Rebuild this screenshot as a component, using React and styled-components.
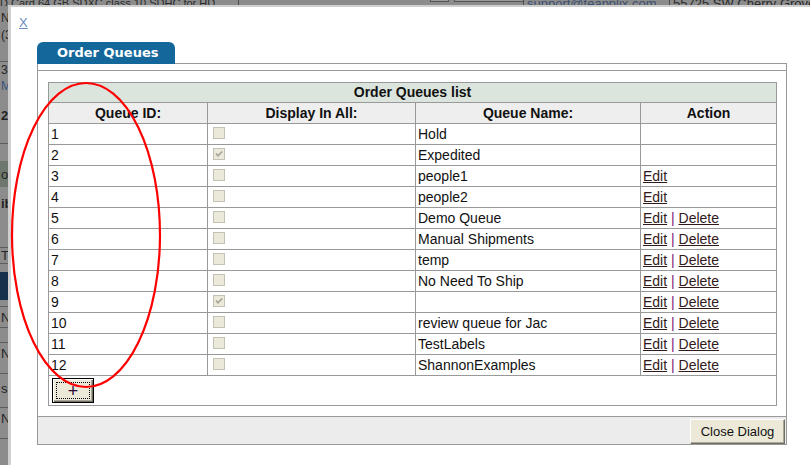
import React from 'react';
import styled, { createGlobalStyle } from 'styled-components';

const GlobalStyle = createGlobalStyle`
  html, body { margin: 0; padding: 0; }
  body {
    background: #8c8c8c;
    font-family: "Liberation Sans", Arial, sans-serif;
    overflow: hidden;
  }
`;

const queues = [
  { id: 1, all: false, name: 'Hold', actions: [] },
  { id: 2, all: true, name: 'Expedited', actions: [] },
  { id: 3, all: false, name: 'people1', actions: ['Edit'] },
  { id: 4, all: false, name: 'people2', actions: ['Edit'] },
  { id: 5, all: false, name: 'Demo Queue', actions: ['Edit', 'Delete'] },
  { id: 6, all: false, name: 'Manual Shipments', actions: ['Edit', 'Delete'] },
  { id: 7, all: false, name: 'temp', actions: ['Edit', 'Delete'] },
  { id: 8, all: false, name: 'No Need To Ship', actions: ['Edit', 'Delete'] },
  { id: 9, all: true, name: '', actions: ['Edit', 'Delete'] },
  { id: 10, all: false, name: 'review queue for Jac', actions: ['Edit', 'Delete'] },
  { id: 11, all: false, name: 'TestLabels', actions: ['Edit', 'Delete'] },
  { id: 12, all: false, name: 'ShannonExamples', actions: ['Edit', 'Delete'] },
];

// rows of the page behind the overlay, only a sliver shows on the left
const sideRows = [
  { h: 4 },
  { h: 16, t: 'Ni', size: 12 },
  { h: 18, t: '(3', size: 12 },
  { h: 17, line: true },
  { h: 16, t: '34', size: 12 },
  { h: 16, t: 'M', size: 12, color: '#37557d' },
  { h: 42, t: '2 (', bold: true },
  { h: 7, line: true },
  { h: 17 },
  { h: 26, t: 'ota', bg: '#6d776d' },
  { h: 32, t: 'ib', bold: true },
  { h: 28, line: true },
  { h: 15, t: 'T', line: true },
  { h: 8 },
  { h: 28, bg: '#17314d' },
  { h: 6, line: true },
  { h: 20, t: 'No', line: true },
  { h: 14, line: true },
  { h: 20, t: 'No' },
  { h: 10, line: true },
  { h: 28, t: 'si' },
  { h: 5, line: true },
  { h: 20, t: 'No' },
  { h: 10, line: true },
];

const Screen = styled.div`
  position: relative;
  width: 810px;
  height: 465px;
  overflow: hidden;
  background: #8c8c8c;
`;

const TopStrip = styled.div`
  display: flex;
  height: 6px;
  overflow: hidden;
  white-space: nowrap;
  color: #2a2a2a;
  line-height: 13px;
`;

const TopCell = styled.div`
  flex: none;
  display: flex;
  width: ${p => p.$w}px;
  margin-top: -3px;
  padding-left: ${p => p.$pad || 0}px;
  border-left: ${p => (p.$edge ? '1px solid #4a4a4a' : 'none')};
  color: ${p => p.$color || 'inherit'};
  font-size: ${p => p.$size || 13}px;
`;

const FakeButton = styled.span`
  flex: none;
  width: ${p => p.$w}px;
  height: 3px;
  margin-left: ${p => p.$ml}px;
  margin-top: 1px;
  background: #9a9a9a;
  border: 1px solid #555;
  border-top: none;
`;

const SideColumn = styled.div`
  display: flex;
  flex-direction: column;
  width: 120px;
`;

const SideRow = styled.div`
  height: ${p => p.$h}px;
  display: flex;
  align-items: center;
  padding-left: 1px;
  background: ${p => p.$bg || 'transparent'};
  border-bottom: ${p => (p.$line ? '1px solid #5e5e5e' : 'none')};
  font-size: ${p => p.$size || 13}px;
  font-weight: ${p => (p.$bold ? 700 : 400)};
  color: ${p => p.$color || '#232323'};
  white-space: nowrap;
`;

const Dialog = styled.div`
  position: absolute;
  left: 8px;
  top: 5px;
  width: 830px;
  height: 480px;
  box-sizing: border-box;
  background: #fff;
  border-left: 3px solid #cfcfcf;
  border-top: 2px solid #cfcfcf;
`;

const CloseLink = styled.a`
  display: block;
  width: 10px;
  margin: 8px 0 0 8px;
  font-size: 13px;
  line-height: 16px;
  color: #6b8cc0;
  text-decoration: underline;
`;

const TabBar = styled.div`
  display: flex;
  width: 750px;
  box-sizing: border-box;
  margin: 11px 0 0 26px;
  border-bottom: 1px solid #999;
`;

const Tab = styled.div`
  position: relative;
  width: 138px;
  height: 22px;
  margin-bottom: -1px;
  box-sizing: border-box;
  padding-left: 20px;
  background: #14679a;
  border-radius: 6px 6px 0 0;
  color: #fff;
  font-family: "DejaVu Sans", Verdana, sans-serif;
  font-weight: 700;
  font-size: 13px;
  line-height: 21px;
`;

const Panel = styled.div`
  width: 750px;
  margin-left: 26px;
  box-sizing: border-box;
  border: 1px solid #999;
  border-top: none;
`;

const PanelGap = styled.div`
  height: 6px;
  border-bottom: 1px solid #999;
`;

const PanelBody = styled.div`
  padding: 11px 10px 10px;
`;

const Grid = styled.table`
  width: 728px;
  table-layout: fixed;
  border-collapse: collapse;
  border: 1px solid #999;
  font-size: 14px;
  color: #111;
`;

const Caption = styled.th`
  background: #dbe5dd;
  border: 1px solid #999;
  padding: 1px 2px;
  line-height: 17px;
  font-size: 14px;
  font-weight: 700;
  color: #111;
`;

const HeadCell = styled.th`
  background: #eeeeee;
  border: 1px solid #999;
  padding: 2px 2px 1px;
  line-height: 17px;
  font-size: 14px;
  font-weight: 700;
  color: #111;
`;

const Cell = styled.td`
  border: 1px solid #999;
  padding: 2px 2px;
  line-height: 16px;
  height: 16px;
  vertical-align: top;
  white-space: nowrap;
  overflow: hidden;
`;

const AddCell = styled.td`
  border: 1px solid #999;
  padding: 2px 2px;
  height: 25px;
`;

const Check = styled.span`
  display: inline-block;
  width: 12px;
  height: 12px;
  margin: 1px 0 0 3px;
  box-sizing: border-box;
  background: #ebe9da;
  border: 1px solid #c4c2b4;
  vertical-align: top;
  svg { display: block; }
`;

const ActionLink = styled.a`
  color: #331a1a;
  text-decoration: underline;
`;

const Sep = styled.span`
  color: #7a1a7a;
`;

const AddButton = styled.button`
  display: flex;
  align-items: center;
  justify-content: center;
  width: 42px;
  height: 25px;
  padding: 0;
  margin-left: 1px;
  box-sizing: border-box;
  background: #ece9d8;
  border: 1px solid #000;
  box-shadow: inset 1px 1px #fff, inset -1px -1px #716f64, inset -2px -2px #aca899;
  font-family: "Liberation Sans", Arial, sans-serif;
  font-size: 18px;
  line-height: 1;
  color: #2a0a3a;
  span {
    display: flex;
    align-items: center;
    justify-content: center;
    width: 32px;
    height: 15px;
    border: 1px dotted #000;
  }
`;

const ButtonPane = styled.div`
  display: flex;
  justify-content: flex-end;
  height: 28px;
  box-sizing: border-box;
  padding: 2px 1px 0 0;
  background: #ececec;
  border-top: 1px solid #999;
`;

const PaneButton = styled.button`
  width: 95px;
  height: 25px;
  padding: 0;
  box-sizing: border-box;
  background: #ece9d8;
  border: 1px solid;
  border-color: #fff #716f64 #716f64 #fff;
  box-shadow: inset -1px -1px #aca899;
  font-family: "Liberation Sans", Arial, sans-serif;
  font-size: 13px;
  color: #111;
`;

const Annotation = styled.svg`
  position: absolute;
  left: 0;
  top: 0;
  z-index: 5;
  pointer-events: none;
`;

const CheckBox = ({ checked }) => (
  <Check>
    {checked && (
      <svg width="10" height="10" viewBox="0 0 10 10">
        <path d="M2 4.5 L4 6.8 L8.2 2.5" fill="none" stroke="#a6a498" strokeWidth="1.6" />
      </svg>
    )}
  </Check>
);

const Actions = ({ list }) => (
  <>
    {list.map((a, i) => (
      <React.Fragment key={a}>
        {i > 0 && <Sep> | </Sep>}
        <ActionLink href="#">{a}</ActionLink>
      </React.Fragment>
    ))}
  </>
);

const App = () => (
  <Screen>
    <GlobalStyle />
    <TopStrip>
      <TopCell $w={238} $size={11}>D Card 64 GB SDXC class 10 SDHC for HD</TopCell>
      <TopCell $w={284} $edge>
        <FakeButton $w={17} $ml={191} />
        <FakeButton $w={68} $ml={5} />
      </TopCell>
      <TopCell $w={142} $edge $pad={3} $color="#3b4f70">support@teapplix.com</TopCell>
      <TopCell $w={200} $edge $pad={3}>55725 SW Cherry Grove Dr</TopCell>
    </TopStrip>
    <SideColumn>
      {sideRows.map((r, i) => (
        <SideRow key={i} $h={r.h} $line={r.line} $bg={r.bg} $bold={r.bold} $size={r.size} $color={r.color}>
          {r.t}
        </SideRow>
      ))}
    </SideColumn>

    <Dialog>
      <CloseLink href="#">X</CloseLink>
      <TabBar>
        <Tab>Order Queues</Tab>
      </TabBar>
      <Panel>
        <PanelGap />
        <PanelBody>
          <Grid>
            <colgroup>
              <col style={{ width: 159 }} />
              <col style={{ width: 208 }} />
              <col style={{ width: 225 }} />
              <col style={{ width: 136 }} />
            </colgroup>
            <tbody>
              <tr>
                <Caption colSpan={4}>Order Queues list</Caption>
              </tr>
              <tr>
                <HeadCell>Queue ID:</HeadCell>
                <HeadCell>Display In All:</HeadCell>
                <HeadCell>Queue Name:</HeadCell>
                <HeadCell>Action</HeadCell>
              </tr>
              {queues.map(q => (
                <tr key={q.id}>
                  <Cell>{q.id}</Cell>
                  <Cell><CheckBox checked={q.all} /></Cell>
                  <Cell>{q.name}</Cell>
                  <Cell><Actions list={q.actions} /></Cell>
                </tr>
              ))}
              <tr>
                <AddCell colSpan={4}>
                  <AddButton type="button"><span>+</span></AddButton>
                </AddCell>
              </tr>
            </tbody>
          </Grid>
        </PanelBody>
        <ButtonPane>
          <PaneButton type="button">Close Dialog</PaneButton>
        </ButtonPane>
      </Panel>
    </Dialog>

    <Annotation width="810" height="465" viewBox="0 0 810 465">
      <ellipse cx="86" cy="235" rx="74" ry="152" fill="none" stroke="#f00" strokeWidth="2.2" />
    </Annotation>
  </Screen>
);

export default App;
